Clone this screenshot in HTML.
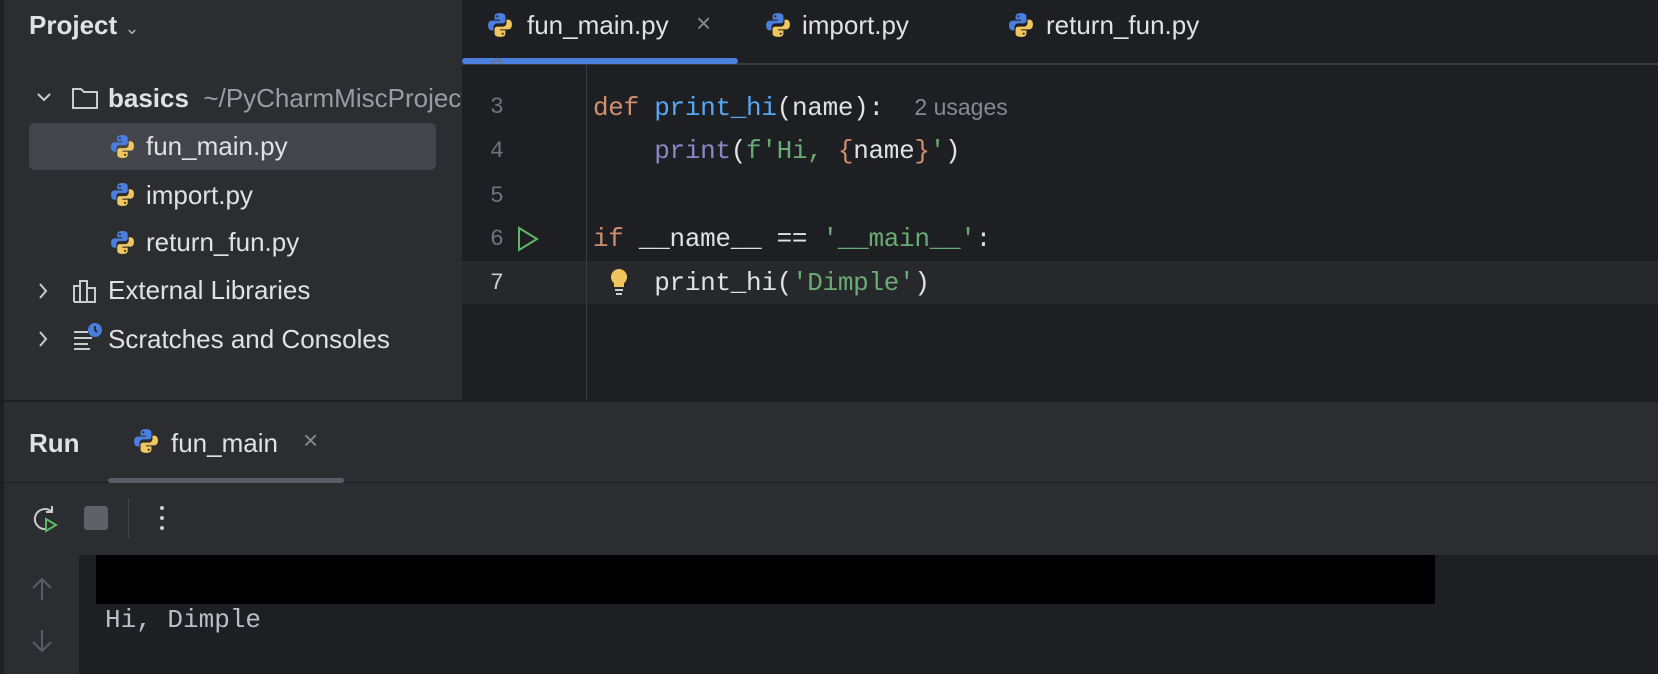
<!DOCTYPE html>
<html><head><meta charset="utf-8"><style>
*{margin:0;padding:0;box-sizing:border-box}
body{width:1658px;height:674px;background:#1e1f22;position:relative;overflow:hidden;font-family:"Liberation Sans",sans-serif;color:#dfe1e5}
.a{position:absolute;white-space:pre}
.ui{font-size:26px;line-height:30px}
.mono{font-family:"Liberation Mono",monospace;font-size:26px;line-height:30px}
.ln{color:#6f737a;font-family:"Liberation Mono",monospace;font-size:23px;line-height:30px}
</style></head><body>
<svg width="0" height="0" style="position:absolute"><defs>
<g id="py"><path d="M12 1c-5 0-5 2-5 3.5V7h5v1H4.5C2 8 1 10 1 12.5S2 17 4.5 17H6v-3c0-2 1.5-3.5 3.5-3.5h5c1.5 0 2.5-1 2.5-2.5V4c0-2-2-3-5-3z" fill="#4a7fe0"/><circle cx="9.5" cy="4" r="1" fill="#2b2d30"/><path d="M12 23c5 0 5-2 5-3.5V17h-5v-1h7.5c2.5 0 3.5-2 3.5-4.5S22 7 19.5 7H18v3c0 2-1.5 3.5-3.5 3.5h-5C8 13.5 7 14.5 7 16v4c0 2 2 3 5 3z" fill="#f0c75e"/><circle cx="14.5" cy="20" r="1" fill="#2b2d30"/></g>
</defs></svg>
<!-- left panel -->
<div class="a" style="left:0;top:0;width:462px;height:400px;background:#2b2d30"></div>
<div class="a" style="left:0;top:0;width:4px;height:674px;background:#1e1f22"></div>
<div class="a ui" style="left:29px;top:10px;font-weight:bold;">Project <span style="font-weight:normal;font-size:18px;color:#aaa">&#8964;</span></div>
<svg class="a" style="left:36px;top:91px" width="16" height="12"><path d="M2 3l6 6 6-6" stroke="#ccc" stroke-width="2" fill="none"/></svg>
<svg class="a" style="left:71px;top:86px" width="28" height="24"><path d="M2 3h8l3 3h13v16H2z" stroke="#ccc" stroke-width="2" fill="none"/></svg>
<div class="a ui" style="left:108px;top:83px;width:354px;overflow:hidden"><b>basics</b>  <span style="color:#9a9ca1">~/PyCharmMiscProjects</span></div>
<div class="a" style="left:29px;top:123px;width:407px;height:47px;background:#43454a;border-radius:6px"></div>
<svg class="a" style="left:110px;top:134px" width="25" height="25" viewBox="0 0 24 24"><use href="#py"/></svg>
<div class="a ui" style="left:146px;top:131px">fun_main.py</div>
<svg class="a" style="left:110px;top:182px" width="25" height="25" viewBox="0 0 24 24"><use href="#py"/></svg>
<div class="a ui" style="left:146px;top:180px">import.py</div>
<svg class="a" style="left:110px;top:230px" width="25" height="25" viewBox="0 0 24 24"><use href="#py"/></svg>
<div class="a ui" style="left:146px;top:227px">return_fun.py</div>
<svg class="a" style="left:37px;top:282px" width="12" height="18"><path d="M3 2l6 7-6 7" stroke="#ccc" stroke-width="2" fill="none"/></svg>
<svg class="a" style="left:72px;top:278px" width="26" height="26"><path d="M2 24V8h6v16M8 24V3h7v21M15 24V10h8v14H2" stroke="#ccc" stroke-width="2" fill="none"/></svg>
<div class="a ui" style="left:108px;top:275px">External Libraries</div>
<svg class="a" style="left:37px;top:330px" width="12" height="18"><path d="M3 2l6 7-6 7" stroke="#ccc" stroke-width="2" fill="none"/></svg>
<svg class="a" style="left:72px;top:322px" width="30" height="28"><path d="M2 10h14M2 16h18M2 22h14M2 27h16" stroke="#ccc" stroke-width="2"/><circle cx="23" cy="8" r="7" fill="#4a7fe0"/><path d="M23 4v4l2 2" stroke="#2b2d30" stroke-width="2" fill="none"/></svg>
<div class="a ui" style="left:108px;top:324px">Scratches and Consoles</div>
<!-- tabs -->
<div class="a" style="left:462px;top:63px;width:1196px;height:2px;background:#393b40"></div>
<div class="a" style="left:462px;top:58px;width:276px;height:6px;background:#4a7fe0;border-radius:3px"></div>
<svg class="a" style="left:487px;top:12px" width="26" height="26" viewBox="0 0 24 24"><use href="#py"/></svg>
<div class="a ui" style="left:527px;top:10px">fun_main.py</div>
<div class="a" style="left:696px;top:8px;font-size:26px;color:#888">×</div>
<svg class="a" style="left:765px;top:12px" width="26" height="26" viewBox="0 0 24 24"><use href="#py"/></svg>
<div class="a ui" style="left:802px;top:10px">import.py</div>
<svg class="a" style="left:1008px;top:12px" width="26" height="26" viewBox="0 0 24 24"><use href="#py"/></svg>
<div class="a ui" style="left:1046px;top:10px">return_fun.py</div>
<!-- editor -->
<div class="a" style="left:462px;top:261px;width:1196px;height:43px;background:#26282c"></div>
<div class="a" style="left:586px;top:65px;width:1px;height:335px;background:#393b40"></div>
<div class="a ln" style="left:490px;top:54px;height:10px;overflow:hidden">2</div>
<div class="a ln" style="left:490px;top:92px">3</div>
<div class="a ln" style="left:490px;top:136px">4</div>
<div class="a ln" style="left:490px;top:181px">5</div>
<div class="a ln" style="left:490px;top:224px">6</div>
<div class="a ln" style="left:490px;top:268px;color:#ccc">7</div>
<svg class="a" style="left:516px;top:226px" width="24" height="26"><path d="M3 2l18 11L3 24z" stroke="#5fb865" stroke-width="2" fill="none"/></svg>
<div class="a mono" style="left:593px;top:92px;letter-spacing:-0.3px"><span style="color:#cf8e6d">def</span> <span style="color:#56a8f5">print_hi</span>(name):  <span style="font-family:'Liberation Sans';font-size:23px;color:#868a91;letter-spacing:0">2 usages</span></div>
<div class="a mono" style="left:593px;top:136px;letter-spacing:-0.3px">    <span style="color:#8888c6">print</span>(<span style="color:#6aab73">f'Hi, </span><span style="color:#cf8e6d">{</span>name<span style="color:#cf8e6d">}</span><span style="color:#6aab73">'</span>)</div>
<div class="a mono" style="left:593px;top:224px;letter-spacing:-0.3px"><span style="color:#cf8e6d">if</span> __name__ == <span style="color:#6aab73">'__main__'</span>:</div>
<svg class="a" style="left:608px;top:268px" width="22" height="28"><circle cx="11" cy="9" r="8" fill="#f2c55c"/><rect x="6" y="12" width="10" height="7" fill="#f2c55c"/><path d="M7 22h8M8 26h6" stroke="#ccc" stroke-width="2"/></svg>
<div class="a mono" style="left:593px;top:268px;letter-spacing:-0.3px">    print_hi(<span style="color:#6aab73">'Dimple'</span>)</div>
<!-- bottom -->
<div class="a" style="left:4px;top:400px;width:1654px;height:155px;background:#2b2d30;border-top:2px solid #1e1f22"></div>
<div class="a" style="left:4px;top:482px;width:1654px;height:1px;background:#1e1f22"></div>
<div class="a ui" style="left:29px;top:428px;font-weight:bold">Run</div>
<svg class="a" style="left:133px;top:428px" width="26" height="26" viewBox="0 0 24 24"><use href="#py"/></svg>
<div class="a ui" style="left:171px;top:428px">fun_main</div>
<div class="a" style="left:303px;top:425px;font-size:26px;color:#888">×</div>
<div class="a" style="left:108px;top:478px;width:236px;height:5px;background:#5a5d63;border-radius:3px"></div>
<svg class="a" style="left:30px;top:503px" width="30" height="30"><path d="M22 9a10 10 0 1 0-6 17" stroke="#ccc" stroke-width="2" fill="none"/><path d="M22 3v6h-6" stroke="#ccc" stroke-width="2" fill="none"/><path d="M16 16l10 6-10 6z" stroke="#5fb865" stroke-width="2" fill="none"/></svg>
<div class="a" style="left:84px;top:506px;width:24px;height:24px;background:#5f6166;border-radius:3px"></div>
<div class="a" style="left:128px;top:498px;width:1px;height:40px;background:#43454a"></div>
<svg class="a" style="left:156px;top:503px" width="12" height="30"><circle cx="6" cy="5" r="2" fill="#ccc"/><circle cx="6" cy="15" r="2" fill="#ccc"/><circle cx="6" cy="25" r="2" fill="#ccc"/></svg>
<div class="a" style="left:4px;top:555px;width:75px;height:119px;background:#2b2d30"></div>
<div class="a" style="left:79px;top:555px;width:1579px;height:119px;background:#1e1f22"></div>
<svg class="a" style="left:30px;top:576px" width="24" height="26"><path d="M12 24V3M3 12l9-9 9 9" stroke="#5a5d63" stroke-width="2" fill="none"/></svg>
<svg class="a" style="left:30px;top:628px" width="24" height="26"><path d="M12 2v21M3 14l9 9 9-9" stroke="#5a5d63" stroke-width="2" fill="none"/></svg>
<div class="a" style="left:96px;top:555px;width:1339px;height:49px;background:#000"></div>
<div class="a mono" style="left:105px;top:605px;color:#bcbec4">Hi, Dimple</div>
</body></html>
